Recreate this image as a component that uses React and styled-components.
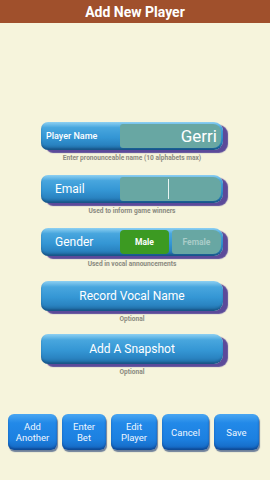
import React from 'react'
import styled, { createGlobalStyle } from 'styled-components'

const GlobalStyle = createGlobalStyle`
  html, body {
    margin: 0;
    padding: 0;
    background: #f6f4dc;
    font-family: Roboto, 'Liberation Sans', sans-serif;
  }
`

const Screen = styled.div`
  width: 270px;
  height: 480px;
  display: flex;
  flex-direction: column;
  background: #f6f4dc;
  overflow: hidden;
`

const Header = styled.div`
  height: 23px;
  background: #a0502c;
  color: #fff;
  font-weight: 700;
  font-size: 14px;
  display: flex;
  align-items: center;
  justify-content: center;
  flex-shrink: 0;
`

const Form = styled.div`
  display: flex;
  flex-direction: column;
  padding: 99px 0 0 41px;
`

const Row = styled.div`
  height: 53px;
  width: 182px;
  display: flex;
  flex-direction: column;
`

const Pill = styled.div`
  height: ${p => p.h}px;
  border-radius: 7px 9px 9px 7px;
  background: linear-gradient(180deg, #8ed0f2 0%, #48a6de 20%, #3496d4 55%, #2a84c2 80%, #1d679e 100%);
  box-shadow: 5px 3px 1px rgba(82, 64, 150, 0.95),
    inset 0 -2px 2px rgba(10, 40, 80, 0.3);
  display: flex;
  align-items: center;
  color: #fff;
  box-sizing: border-box;
  padding: 2px;
  justify-content: ${p => (p.center ? 'center' : 'flex-start')};
  font-size: 12px;
`

const Label = styled.div`
  width: 77px;
  box-sizing: border-box;
  padding-left: ${p => (p.small ? 3 : 12)}px;
  font-size: ${p => (p.small ? 9 : 12)}px;
  font-weight: ${p => (p.small ? 500 : 400)};
  white-space: nowrap;
`

const Field = styled.div`
  flex: 1;
  align-self: stretch;
  background: #68a7a3;
  border-radius: 3px 8px 8px 3px;
  display: flex;
  align-items: center;
  justify-content: flex-end;
  padding-right: 4px;
  font-size: 17px;
  color: #fff;
  position: relative;
`

const Cursor = styled.div`
  position: absolute;
  left: 48px;
  top: 2px;
  bottom: 2px;
  width: 1px;
  background: #e8f4f2;
`

const Toggle = styled.div`
  flex: 1;
  align-self: stretch;
  display: flex;
  gap: 3px;
`

const Option = styled.div`
  flex: 1;
  border-radius: ${p => (p.on ? '4px' : '3px 8px 8px 3px')};
  background: ${p => (p.on ? '#3c9a22' : '#68a7a3')};
  color: ${p => (p.on ? '#fff' : '#a8ccc8')};
  font-weight: 700;
  font-size: 8.5px;
  display: flex;
  align-items: center;
  justify-content: center;
`

const Caption = styled.div`
  margin-top: 4px;
  text-align: center;
  font-size: 6.6px;
  font-weight: 700;
  color: #8a8a80;
  white-space: nowrap;
`

const Footer = styled.div`
  margin-top: auto;
  margin-bottom: 30px;
  padding-left: 8px;
  display: flex;
  gap: 5px;
`

const Button = styled.div`
  width: ${p => p.w}px;
  height: 36px;
  border-radius: 6px;
  background: linear-gradient(180deg, #4aa6f2 0%, #2289e8 25%, #1c80e0 70%, #1466c0 100%);
  box-shadow: 1px 2px 1px rgba(20, 50, 110, 0.6), inset 0 -2px 2px rgba(8, 40, 100, 0.45);
  color: #eef6ff;
  font-size: 9.5px;
  line-height: 11px;
  text-align: center;
  display: flex;
  align-items: center;
  justify-content: center;
`

export default function App() {
  return (
    <Screen>
      <GlobalStyle />
      <Header>Add New Player</Header>
      <Form>
        <Row>
          <Pill h={28}>
            <Label small>Player Name</Label>
            <Field>Gerri</Field>
          </Pill>
          <Caption>Enter pronounceable name (10 alphabets max)</Caption>
        </Row>
        <Row>
          <Pill h={28}>
            <Label>Email</Label>
            <Field>
              <Cursor />
            </Field>
          </Pill>
          <Caption>Used to inform game winners</Caption>
        </Row>
        <Row>
          <Pill h={28}>
            <Label>Gender</Label>
            <Toggle>
              <Option on>Male</Option>
              <Option>Female</Option>
            </Toggle>
          </Pill>
          <Caption>Used in vocal announcements</Caption>
        </Row>
        <Row>
          <Pill h={30} center>Record Vocal Name</Pill>
          <Caption>Optional</Caption>
        </Row>
        <Row>
          <Pill h={30} center>Add A Snapshot</Pill>
          <Caption>Optional</Caption>
        </Row>
      </Form>
      <Footer>
        <Button w={49}>Add<br />Another</Button>
        <Button w={44}>Enter<br />Bet</Button>
        <Button w={46}>Edit<br />Player</Button>
        <Button w={47}>Cancel</Button>
        <Button w={45}>Save</Button>
      </Footer>
    </Screen>
  )
}
